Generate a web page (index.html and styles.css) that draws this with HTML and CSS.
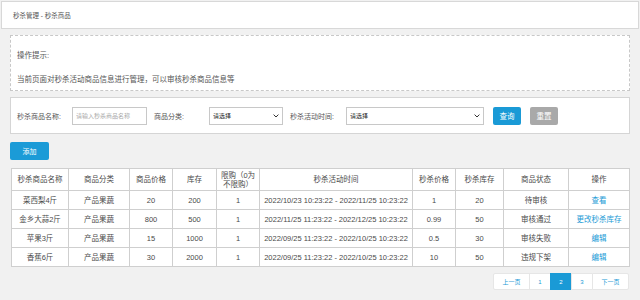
FILE: index.html
```html
<!DOCTYPE html>
<html lang="zh">
<head>
<meta charset="utf-8">
<link rel="stylesheet" href="styles.css">
</head>
<body>
<div class="page">
  <div class="topbar">秒杀管理 - 秒杀商品</div>
  <div class="content">
    <div class="tips">
      <p class="tip-title">操作提示:</p>
      <p class="tip-text">当前页面对秒杀活动商品信息进行管理，可以审核秒杀商品信息等</p>
    </div>
    <div class="search">
      <label class="lbl lbl-name">秒杀商品名称:</label>
      <input class="inp" type="text" placeholder="请输入秒杀商品名称">
      <label class="lbl lbl-cat">商品分类:</label>
      <span class="selwrap sel-cat"><select class="sel"><option>请选择</option></select><svg class="chev" width="6" height="4" viewBox="0 0 6 4"><path d="M0.6 0.6 L3 3 L5.4 0.6" fill="none" stroke="#333" stroke-width="1"/></svg></span>
      <label class="lbl lbl-time">秒杀活动时间:</label>
      <span class="selwrap sel-time"><select class="sel"><option>请选择</option></select><svg class="chev" width="6" height="4" viewBox="0 0 6 4"><path d="M0.6 0.6 L3 3 L5.4 0.6" fill="none" stroke="#333" stroke-width="1"/></svg></span>
      <button class="btn btn-blue">查询</button>
      <button class="btn btn-gray">重置</button>
    </div>
    <div class="actions"><button class="btn btn-add">添加</button></div>
    <table class="grid">
      <colgroup>
        <col style="width:57px"><col style="width:61px"><col style="width:43px"><col style="width:44px"><col style="width:43px"><col style="width:153px"><col style="width:43px"><col style="width:48px"><col style="width:65px"><col style="width:61px">
      </colgroup>
      <thead>
        <tr><th>秒杀商品名称</th><th>商品分类</th><th>商品价格</th><th>库存</th><th>限购（0为不限购）</th><th>秒杀活动时间</th><th>秒杀价格</th><th>秒杀库存</th><th>商品状态</th><th>操作</th></tr>
      </thead>
      <tbody>
        <tr><td>菜西梨4斤</td><td>产品果蔬</td><td>20</td><td>200</td><td>1</td><td>2022/10/23 10:23:22 - 2022/11/25 10:23:22</td><td>1</td><td>20</td><td>待审核</td><td><a class="link">查看</a></td></tr>
        <tr><td>金乡大蒜2斤</td><td>产品果蔬</td><td>800</td><td>500</td><td>1</td><td>2022/11/25 11:23:22 - 2022/12/25 10:23:22</td><td>0.99</td><td>50</td><td>审核通过</td><td><a class="link">更改秒杀库存</a></td></tr>
        <tr><td>苹果3斤</td><td>产品果蔬</td><td>15</td><td>1000</td><td>1</td><td>2022/09/25 11:23:22 - 2022/10/25 10:23:22</td><td>0.5</td><td>30</td><td>审核失败</td><td><a class="link">编辑</a></td></tr>
        <tr><td>香蕉6斤</td><td>产品果蔬</td><td>30</td><td>2000</td><td>1</td><td>2022/09/25 11:23:22 - 2022/10/25 10:23:22</td><td>10</td><td>50</td><td>违规下架</td><td><a class="link">编辑</a></td></tr>
      </tbody>
    </table>
    <div class="pager">
      <a class="pg pg-wide">上一页</a><a class="pg">1</a><a class="pg pg-on">2</a><a class="pg">3</a><a class="pg pg-wide">下一页</a>
    </div>
  </div>
</div>
</body>
</html>
```
FILE: styles.css
```css
* { box-sizing: border-box; }
html, body { margin: 0; padding: 0; }
body {
  background: #ffffff;
  font-family: "Liberation Sans", Arial, "Noto Sans CJK SC", sans-serif;
  color: #4a4a4a;
  font-size: 7.5px;
}
.page {
  width: 640px;
  height: 300px;
  padding: 1px 1px 0 1px;
  background: #f1f1f1;
}
.topbar {
  height: 28px;
  background: #fff;
  border: 1px solid #d8d8d8;
  padding-left: 11px;
  display: flex;
  align-items: center;
  font-size: 6.5px;
  color: #555;
}
.content {
  padding: 6px 9px 0 9px;
}
.tips {
  height: 56px;
  background: #fff;
  border: 1px dashed #c8c8c8;
  padding: 0 0 0 6px;
}
.tips p { margin: 0; color: #555; }
.tip-title { padding-top: 13px; }
.tip-text { padding-top: 13px; }
.search {
  margin-top: 6px;
  height: 37px;
  background: #fff;
  border: 1px solid #d5d5d5;
  display: flex;
  align-items: center;
  padding-left: 6px;
}
.lbl { font-size: 7px; color: #555; }
.lbl-name { width: 55px; }
.lbl-cat { margin-left: 7px; width: 55px; }
.lbl-time { margin-left: 7px; width: 56px; }
.inp {
  width: 75px;
  height: 18px;
  border: 1px solid #c8c8c8;
  font-size: 6px;
  padding: 0 3px;
  font-family: inherit;
  margin: 0;
}
.inp::placeholder { color: #aaa; }
.selwrap {
  position: relative;
  display: block;
  height: 18px;
}
.sel {
  appearance: none;
  -webkit-appearance: none;
  width: 100%;
  height: 18px;
  margin: 0;
  border: 1px solid #c8c8c8;
  border-radius: 0;
  background: #fff;
  font-size: 6px;
  font-family: inherit;
  color: #222;
  padding: 0 3px;
}
.chev {
  position: absolute;
  right: 4px;
  top: 7px;
  pointer-events: none;
}
.sel-cat { width: 74px; }
.sel-time { width: 138px; }
.btn {
  border: none;
  color: #fff;
  font-family: inherit;
  font-size: 7.5px;
  height: 18px;
  border-radius: 2px;
  padding: 0;
  cursor: pointer;
}
.btn-blue { background: #1a9ad6; width: 28px; margin-left: 9px; }
.btn-gray { background: #a9a9a9; width: 28px; margin-left: 9px; }
.actions { margin-top: 8px; display: flex; }
.btn-add { background: #1b9bd7; width: 39px; height: 18px; font-size: 7px; }
.grid {
  margin-top: 8px;
  margin-left: 1px;
  width: 618px;
  table-layout: fixed;
  border-collapse: collapse;
  background: #fff;
}
.grid th, .grid td {
  border: 1px solid #cfcfcf;
  text-align: center;
  font-weight: normal;
  padding: 0 2px;
  color: #4a4a4a;
  line-height: 9px;
}
.grid th { height: 22px; }
.grid td { height: 19px; }
.link { color: #1a9ad6; }
.pager {
  margin-top: 6px;
  display: flex;
  justify-content: flex-end;
  padding-right: 1px;
}
.pg {
  height: 17px;
  width: 22px;
  display: flex;
  align-items: center;
  justify-content: center;
  background: #fff;
  border: 1px solid #e6e6e6;
  margin-left: -1px;
  font-size: 6px;
  color: #1a9ad6;
}
.pg-wide { width: 37px; }
.pg:first-child { border-radius: 2px 0 0 2px; }
.pg:last-child { border-radius: 0 2px 2px 0; }
.pg-on { background: #1a9ad6; color: #fff; border-color: #1a9ad6; }
```
